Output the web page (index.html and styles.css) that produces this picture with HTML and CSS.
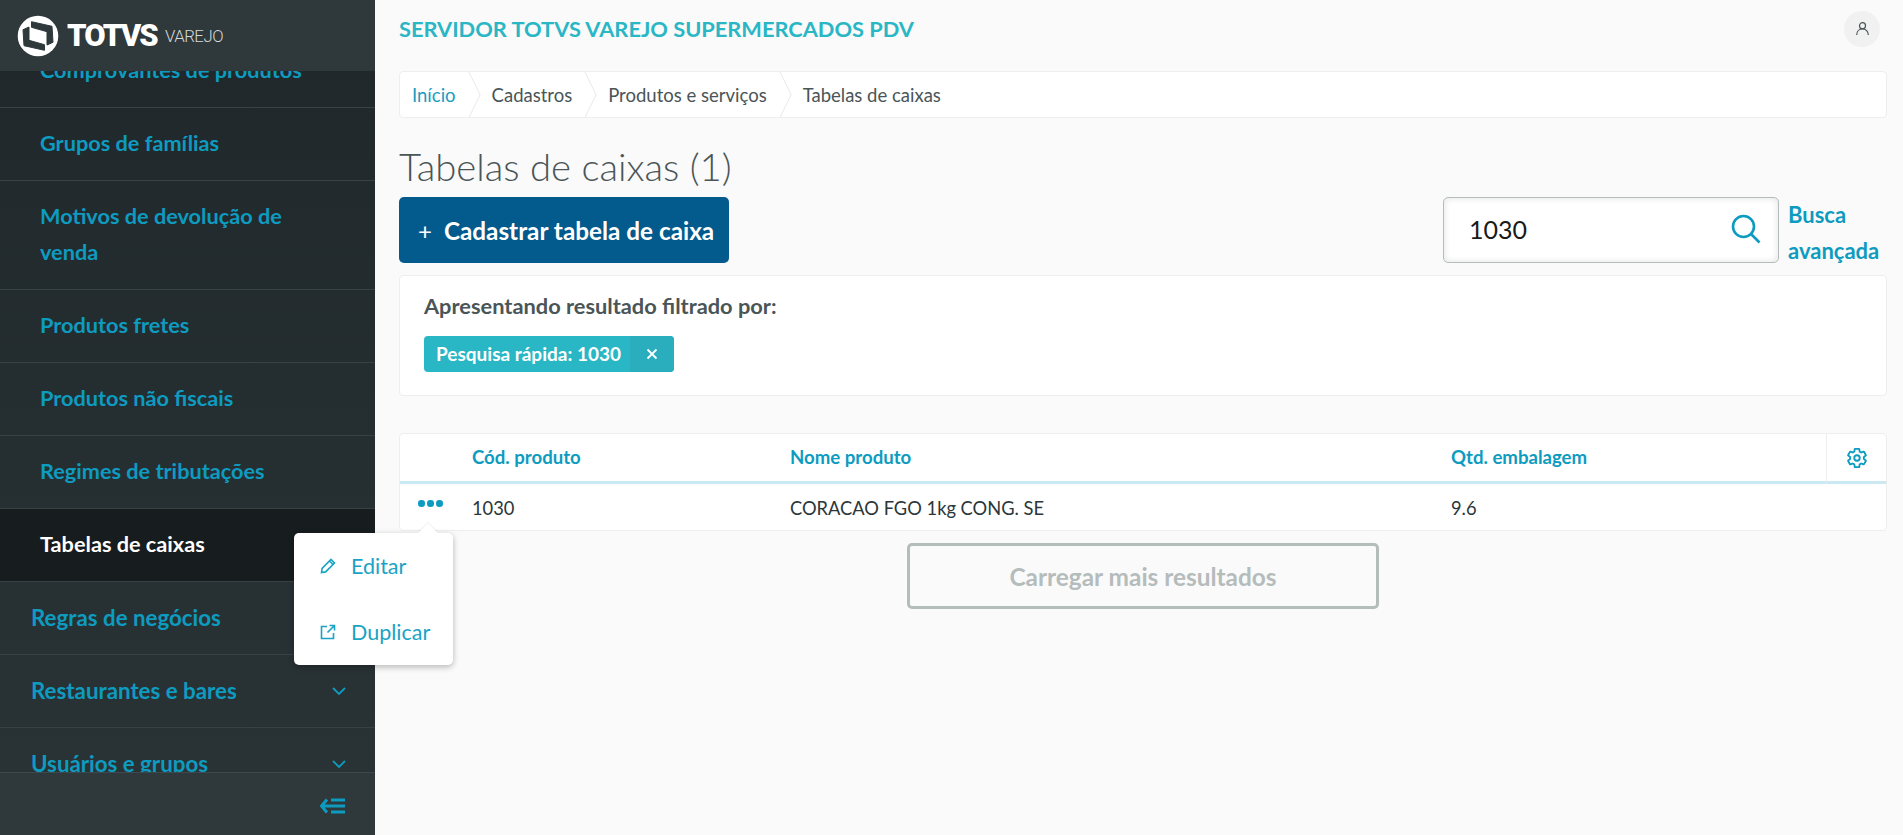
FILE: index.html
```html
<!DOCTYPE html>
<html lang="pt-BR">
<head>
<meta charset="utf-8">
<title>Tabelas de caixas</title>
<link rel="stylesheet" href="styles.css">
</head>
<body>
<div class="app">
  <aside class="sidebar">
    <header class="brand">
      <svg class="brand-mark" viewBox="0 0 42 42" width="42" height="42">
        <circle cx="21" cy="21" r="20.3" fill="#fff"/>
        <path d="M14.500 6.700 35 11.300 36 27.300 30 30 30 16.700 14.500 12.300Z" fill="#2f383b" stroke="#2f383b" stroke-linejoin="round"/>
        <path d="M27.500 35.300 7 30.700 6 14.700 12 12 12 25.300 27.500 29.700Z" fill="#2f383b" stroke="#2f383b" stroke-linejoin="round"/>
      </svg>
      <span class="brand-name">TOTVS</span>
      <span class="brand-sub">VAREJO</span>
    </header>
    <nav class="menu">
      <ul class="menu-list">
        <li class="menu-item sub">Comprovantes de produtos</li>
        <li class="menu-item sub">Grupos de famílias</li>
        <li class="menu-item sub wrap">Motivos de devolução de venda</li>
        <li class="menu-item sub">Produtos fretes</li>
        <li class="menu-item sub">Produtos não fiscais</li>
        <li class="menu-item sub">Regimes de tributações</li>
        <li class="menu-item sub active">Tabelas de caixas</li>
        <li class="menu-item">Regras de negócios<svg class="chev" viewBox="0 0 14 8" width="14" height="8"><path d="M1 1l6 6 6-6"/></svg></li>
        <li class="menu-item">Restaurantes e bares<svg class="chev" viewBox="0 0 14 8" width="14" height="8"><path d="M1 1l6 6 6-6"/></svg></li>
        <li class="menu-item">Usuários e grupos<svg class="chev" viewBox="0 0 14 8" width="14" height="8"><path d="M1 1l6 6 6-6"/></svg></li>
      </ul>
    </nav>
    <footer class="side-foot">
      <svg class="collapse" viewBox="0 0 25 16" width="25" height="16"><path d="M7 1.500 1.500 8 7 14.500M2 8h23M11 2h14M11 14h14"/></svg>
    </footer>
  </aside>
  <main class="main">
    <div class="topbar">
      <h2 class="company">SERVIDOR TOTVS VAREJO SUPERMERCADOS PDV</h2>
      <span class="avatar"><svg viewBox="0 0 16 16" width="15" height="15"><circle cx="8" cy="5" r="3.200"/><path d="M1.800 15c0-4 2.600-6.500 6.200-6.500s6.200 2.500 6.200 6.500"/></svg></span>
    </div>
    <ol class="crumbs">
      <li class="crumb link">Início</li>
      <li class="crumb">Cadastros</li>
      <li class="crumb">Produtos e serviços</li>
      <li class="crumb last">Tabelas de caixas</li>
    </ol>
    <h1 class="title">Tabelas de caixas (1)</h1>
    <div class="actions">
      <button class="primary"><span class="plus">+</span>Cadastrar tabela de caixa</button>
      <div class="search-wrap">
        <div class="search">
          <span class="search-val">1030</span>
          <svg class="search-ico" viewBox="0 0 30 30" width="30" height="30"><circle cx="12.500" cy="12.500" r="10.500"/><path d="M20 20l8.500 8.500"/></svg>
        </div>
        <a class="adv">Busca avançada</a>
      </div>
    </div>
    <section class="filters">
      <p class="filters-label">Apresentando resultado filtrado por:</p>
      <div class="chip"><span class="chip-text">Pesquisa rápida: 1030</span><span class="chip-x"><svg viewBox="0 0 12 12" width="12" height="12"><path d="M1.500 1.500l9 9M10.500 1.500l-9 9"/></svg></span></div>
    </section>
    <div class="table-card">
      <table class="grid">
        <colgroup><col class="c-act"><col class="c-cod"><col class="c-nome"><col class="c-qtd"><col class="c-cfg"></colgroup>
        <thead>
          <tr>
            <th></th><th>Cód. produto</th><th>Nome produto</th><th>Qtd. embalagem</th>
            <th class="cfg"><svg viewBox="0 0 24 24" width="22" height="22"><path d="M19.430 12.980c.04-.32.07-.64.07-.98 0-.34-.03-.66-.07-.98l2.110-1.650c.19-.15.24-.42.12-.64l-2-3.460c-.09-.16-.26-.25-.44-.25-.06 0-.12.01-.17.03l-2.490 1c-.52-.4-1.080-.73-1.690-.98l-.38-2.650C14.460 2.180 14.250 2 14 2h-4c-.25 0-.46.18-.49.42l-.38 2.650c-.61.25-1.170.59-1.690.98l-2.490-1c-.06-.02-.12-.03-.18-.03-.17 0-.34.09-.43.25l-2 3.460c-.13.22-.07.49.12.64l2.110 1.650c-.04.32-.07.65-.07.98 0 .33.03.66.07.98l-2.110 1.650c-.19.15-.24.42-.12.64l2 3.460c.09.16.26.25.44.25.06 0 .12-.01.17-.03l2.490-1c.52.4 1.080.73 1.690.98l.38 2.650c.03.24.24.42.49.42h4c.25 0 .46-.18.49-.42l.38-2.650c.61-.25 1.170-.59 1.690-.98l2.490 1c.06.02.12.03.18.03.17 0 .34-.09.43-.25l2-3.460c.12-.22.07-.49-.12-.64l-2.110-1.650z"/><circle cx="12" cy="12" r="3"/></svg></th>
          </tr>
        </thead>
        <tbody>
          <tr>
            <td class="act">
              <span class="dots"><i></i><i></i><i></i></span>
              <div class="popup">
                <a class="popup-item"><svg viewBox="0 0 16 16" width="16" height="16"><path d="M1.500 14.500l.6-4L11 1.500l3.500 3.500-8.900 8.900zM9.500 3l3.500 3.500"/></svg>Editar</a>
                <a class="popup-item"><svg viewBox="0 0 16 16" width="16" height="16"><path d="M7 2.500H1.500v12h12V9M9.500 1.500h5v5M14.500 1.500 7.500 8.500"/></svg>Duplicar</a>
              </div>
            </td>
            <td>1030</td><td>CORACAO FGO 1kg CONG. SE</td><td>9.6</td><td></td>
          </tr>
        </tbody>
      </table>
    </div>
    <div class="more-row"><button class="more">Carregar mais resultados</button></div>
  </main>
</div>
</body>
</html>
```
FILE: styles.css
```css
* { box-sizing: border-box; }
html, body { margin: 0; height: 100%; overflow: hidden; }
body { font-family: "Lato", "Noto Sans", sans-serif; background: #fafafa; color: #2c3739; }
h1, h2, p, ul, ol { margin: 0; padding: 0; list-style: none; }

.app { display: flex; height: 835px; }

.sidebar { width: 375px; flex: none; display: flex; flex-direction: column; background: linear-gradient(#1f272a, #2a3437); }
.brand { height: 71px; flex: none; background: #2f383b; display: flex; align-items: center; padding-left: 17px; color: #fff; position: relative; z-index: 1; }
.brand-mark { display: block; flex: none; }
.brand-name { font-family: "Roboto", sans-serif; font-weight: 900; font-size: 31px; letter-spacing: -1.800px; margin-left: 8px; }
.brand-sub { font-family: "Roboto", sans-serif; font-weight: 300; font-size: 16.800px; letter-spacing: -.5px; color: #d5d8d9; margin-left: 8px; }
.menu { flex: 1; overflow: hidden; min-height: 0; }
.menu-list { margin-top: -36px; }
.menu-item { height: 73px; padding: 0 31px 1px; display: flex; align-items: center; justify-content: space-between; font-size: 22.300px; font-weight: 700; color: #0e9bc0; border-bottom: 1px solid #384245; }
.menu-item.sub { padding-left: 40px; padding-bottom: 2px; font-size: 21.700px; }
.menu-item.wrap { height: 109px; line-height: 36.500px; padding-right: 60px; }
.menu-item.active { background: #171c1f; color: #fff; }
.chev { fill: none; stroke: #0e9bc0; stroke-width: 1.800; margin-right: -2px; }
.side-foot { height: 63px; flex: none; background: #2f383b; border-top: 1px solid #3d494c; display: flex; align-items: center; justify-content: flex-end; padding: 4px 30px 0 0; }
.collapse { fill: none; stroke: #0e9bc0; stroke-width: 3; }

.main { flex: 1; min-width: 0; padding: 0 16px 0 24px; }
.topbar { height: 71px; padding-bottom: 14px; display: flex; align-items: center; justify-content: space-between; }
.company { font-size: 21.800px; font-weight: 700; color: #29b6c5; }
.avatar { width: 36px; height: 36px; margin-right: 7px; border-radius: 50%; background: #f1f1f1; display: flex; align-items: center; justify-content: center; }
.avatar svg { fill: none; stroke: #4a5557; stroke-width: 1.300; }
.crumbs { height: 47px; background: #fff; border: 1px solid #eee; border-radius: 4px; display: flex; align-items: center; padding-left: 12px; font-size: 18.500px; color: #4a5557; overflow: hidden; }
.crumb { position: relative; height: 100%; display: flex; align-items: center; padding-right: 36px; }
.crumb.link { color: #1a9dc0; }
.crumb:not(.last)::before, .crumb:not(.last)::after { content: ""; position: absolute; right: 17px; width: 1px; height: 50%; background: #e8e8e8; }
.crumb:not(.last)::before { top: 0; transform: skewX(26deg); }
.crumb:not(.last)::after { bottom: 0; transform: skewX(-26deg); }
.title { font-size: 38.300px; font-weight: 300; color: #4a5557; line-height: 40px; margin-top: 28px; height: 51px; }
.actions { display: flex; justify-content: space-between; height: 66px; }
.primary { width: 330px; height: 66px; border: 0; border-radius: 5px; background: #035a8c; color: #fff; font: 700 24.300px "Lato", sans-serif; display: flex; align-items: center; padding: 0 0 0 19px; white-space: nowrap; }
.plus { font-weight: 400; font-size: 24px; margin-right: 12px; }
.search-wrap { display: flex; }
.search { width: 336px; height: 66px; background: #fff; border: 1px solid #b5bcbc; border-radius: 5px; box-shadow: inset 0 0 7px rgba(0,0,0,.12); display: flex; align-items: center; justify-content: space-between; padding: 0 17px 2px 25px; }
.search-val { font-size: 25px; color: #1a1a1a; }
.search-ico { fill: none; stroke: #0e9bc0; stroke-width: 2.600; }
.adv { width: 99px; margin-left: 9px; font-size: 22px; font-weight: 700; line-height: 36px; color: #0e9bc0; }
.filters { margin-top: 12px; height: 121px; background: #fff; border: 1px solid #eee; border-radius: 4px; padding: 12px 24px 0; }
.filters-label { font-size: 21.800px; font-weight: 700; color: #4a5557; line-height: 36px; }
.chip { margin-top: 12px; display: inline-flex; height: 36px; border-radius: 4px; overflow: hidden; background: #29b6c5; color: #fff; font-size: 19px; font-weight: 700; align-items: center; }
.chip-text { padding: 0 9px 1px 12px; white-space: nowrap; }
.chip-x { width: 44px; height: 100%; background: #2aaebd; display: flex; align-items: center; justify-content: center; }
.chip-x svg { fill: none; stroke: #fff; stroke-width: 1.800; }
.table-card { margin-top: 37px; background: #fff; border: 1px solid #eee; border-radius: 4px; }
.grid { width: 100%; border-collapse: separate; border-spacing: 0; table-layout: fixed; }
.c-act { width: 72px; } .c-cod { width: 318px; } .c-nome { width: 661px; } .c-cfg { width: 60px; }
.grid th { height: 50px; border-bottom: 3px solid #cbe9f3; text-align: left; padding: 0 0 2px; font-size: 18.600px; font-weight: 700; color: #0e9bc0; }
.grid th.cfg { border-left: 1px solid #eee; text-align: center; padding: 0; }
.cfg svg { display: block; margin: 0 auto; fill: none; stroke: #0e9bc0; stroke-width: 2; }
.grid td { height: 46px; padding: 2px 0 0; font-size: 18.300px; color: #2c3739; }
.act { position: relative; }
.dots { display: flex; gap: 2.500px; padding-left: 18px; margin-top: -8px; }
.dots i { width: 6.500px; height: 6.500px; border-radius: 50%; background: #0e9bc0; }
.popup { position: absolute; z-index: 5; left: -106px; top: 49px; width: 159px; height: 132px; background: #fff; border-radius: 5px; box-shadow: 0 2px 6px rgba(0,0,0,.28); padding-left: 26px; display: flex; flex-direction: column; justify-content: space-around; }
.popup::before { content: ""; position: absolute; left: 127px; top: -7px; width: 14px; height: 14px; background: #fff; transform: rotate(45deg); box-shadow: -1px -1px 1px rgba(0,0,0,.06); }
.popup-item { display: flex; align-items: center; gap: 15px; font-size: 21.500px; color: #1aa3c4; }
.popup-item svg { fill: none; stroke: #1aa3c4; stroke-width: 1.600; flex: none; }
.more-row { display: flex; justify-content: center; margin-top: 12px; }
.more { width: 472px; height: 66px; background: transparent; border: 3px solid #b5bcbc; border-radius: 5px; color: #b5bcbc; font: 700 24.400px "Lato", sans-serif; }
```
